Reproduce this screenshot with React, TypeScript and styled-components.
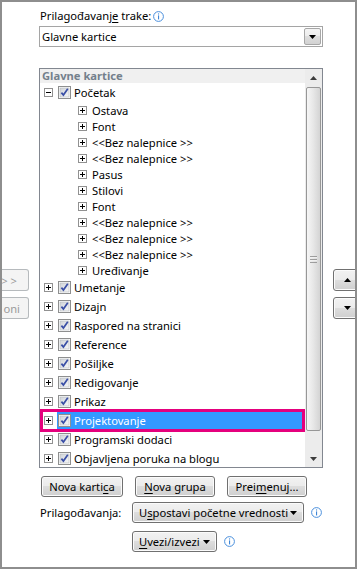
import styled, { createGlobalStyle, css } from 'styled-components'

const GlobalStyle = createGlobalStyle`
  html, body {
    margin: 0;
    padding: 0;
    background: #fff;
  }
  body {
    font-family: "Noto Sans", "DejaVu Sans", sans-serif;
    font-size: 11.2px;
    color: #000;
  }
  * {
    box-sizing: border-box;
  }
`

const groups = [
  'Ostava',
  'Font',
  '<<Bez nalepnice >>',
  '<<Bez nalepnice >>',
  'Pasus',
  'Stilovi',
  'Font',
  '<<Bez nalepnice >>',
  '<<Bez nalepnice >>',
  '<<Bez nalepnice >>',
  'Uređivanje',
]

const tabs = [
  'Umetanje',
  'Dizajn',
  'Raspored na stranici',
  'Reference',
  'Pošiljke',
  'Redigovanje',
  'Prikaz',
  'Projektovanje',
  'Programski dodaci',
  'Objavljena poruka na blogu',
]

const SELECTED_TAB = 'Projektovanje'

const Triangle = ({ up, color = '#000' }: { up?: boolean; color?: string }) => (
  <svg width="7" height="4" viewBox="0 0 7 4">
    <polygon points={up ? '0,4 7,4 3.5,0' : '0,0 7,0 3.5,4'} fill={color} />
  </svg>
)

const InfoIcon = () => (
  <svg width="11" height="11" viewBox="0 0 11 11">
    <circle cx="5.5" cy="5.5" r="4.9" fill="#fff" stroke="#4a8fdc" strokeWidth="1" />
    <rect x="5" y="2.4" width="1.1" height="1.1" fill="#3f86d6" />
    <rect x="5" y="4.4" width="1.1" height="4" fill="#3f86d6" />
  </svg>
)

const CheckBox = () => (
  <svg width="13" height="13" viewBox="0 0 13 13">
    <defs>
      <linearGradient id="cbFill" x1="0" y1="0" x2="1" y2="1">
        <stop offset="0" stopColor="#cfd3d8" />
        <stop offset="1" stopColor="#f7f8f9" />
      </linearGradient>
    </defs>
    <rect x="0.5" y="0.5" width="12" height="12" fill="#fff" stroke="#8e8f8f" />
    <rect x="2" y="2" width="9" height="9" fill="url(#cbFill)" stroke="#b4b8bd" strokeWidth="0.6" />
    <path d="M3.4 6.6 L5.4 9.1 L9.8 2.8" fill="none" stroke="#3a4fa6" strokeWidth="1.7" />
  </svg>
)

const Expander = ({ open }: { open?: boolean }) => (
  <ExpanderBox>
    <svg width="9" height="9" viewBox="0 0 9 9">
      <rect x="0.5" y="0.5" width="8" height="8" fill="#fff" stroke="#919191" />
      <rect x="2" y="4" width="5" height="1" fill="#000" />
      {!open && <rect x="4" y="2" width="1" height="5" fill="#000" />}
    </svg>
  </ExpanderBox>
)

const Key = ({ children }: { children: string }) => <Accel>{children}</Accel>

export default function App() {
  return (
    <>
      <GlobalStyle />
      <Frame>
        <SideColumn $side="left">
          <SideButton $side="left" $pad={11} disabled>
            &gt; &gt;
          </SideButton>
          <SideButton $side="left" $pad={8} disabled>
            oni
          </SideButton>
        </SideColumn>

        <Main>
          <Heading>
            <span>
              Prilagođavanj<Key>e</Key> trake:
            </span>
            <InfoIcon />
          </Heading>

          <Combo>
            <ComboText>Glavne kartice</ComboText>
            <ComboButton>
              <Triangle />
            </ComboButton>
          </Combo>

          <Tree>
            <TreeBody>
              <TreeHeader>Glavne kartice</TreeHeader>
              <TopRow>
                <Expander open />
                <ItemLabel>
                  <CheckBox />
                  <span>Početak</span>
                </ItemLabel>
              </TopRow>
              {groups.map((g, i) => (
                <ChildRow key={i}>
                  <Expander />
                  <span>{g}</span>
                </ChildRow>
              ))}
              {tabs.map((t) => (
                <TopRow key={t} $selected={t === SELECTED_TAB}>
                  <Expander />
                  <ItemLabel $selected={t === SELECTED_TAB}>
                    <CheckBox />
                    <span>{t}</span>
                  </ItemLabel>
                </TopRow>
              ))}
            </TreeBody>
            <ScrollBar>
              <ScrollArrow>
                <Triangle up color="#3c3c3c" />
              </ScrollArrow>
              <Thumb>
                <Grip />
              </Thumb>
              <ScrollTrack />
              <ScrollArrow>
                <Triangle color="#3c3c3c" />
              </ScrollArrow>
            </ScrollBar>
          </Tree>

          <ButtonRow>
            <PushButton $w={82}>
              Nova karti<Key>c</Key>a
            </PushButton>
            <PushButton $w={80}>
              <Key>N</Key>ova grupa
            </PushButton>
            <PushButton $w={80}>
              Prei<Key>m</Key>enuj...
            </PushButton>
          </ButtonRow>

          <FieldRow>
            <FieldLabel>Prilagođavanja:</FieldLabel>
            <PushButton $w={172} $menu>
              <span>
                U<Key>s</Key>postavi početne vrednosti
              </span>
              <Triangle />
            </PushButton>
            <InfoSlot>
              <InfoIcon />
            </InfoSlot>
          </FieldRow>

          <FieldRow $indent>
            <PushButton $w={85} $menu>
              <span>
                <Key>U</Key>vezi/izvezi
              </span>
              <Triangle />
            </PushButton>
            <InfoSlot>
              <InfoIcon />
            </InfoSlot>
          </FieldRow>
        </Main>

        <SideColumn $side="right">
          <SideButton $side="right">
            <Triangle up />
          </SideButton>
          <SideButton $side="right">
            <Triangle />
          </SideButton>
        </SideColumn>
      </Frame>
    </>
  )
}

const Frame = styled.div`
  width: 357px;
  height: 569px;
  border: 2px solid #8e8e8e;
  overflow: hidden;
  display: grid;
  grid-template-columns: 37px 284px 1fr;
  background: #fff;
`

const SideColumn = styled.div<{ $side: 'left' | 'right' }>`
  display: flex;
  flex-direction: column;
  gap: 6px;
  padding-top: 267px;
  align-items: ${(p) => (p.$side === 'left' ? 'flex-end' : 'flex-start')};
  overflow: hidden;
`

const SideButton = styled.button<{ $side: 'left' | 'right'; $pad?: number }>`
  flex: none;
  height: 22px;
  font: inherit;
  white-space: nowrap;
  display: flex;
  align-items: center;
  padding: 0;
  ${(p) =>
    p.$side === 'left'
      ? css`
          width: 27px;
          margin-right: 10px;
          justify-content: flex-end;
          padding-right: ${p.$pad ?? 10}px;
          border: 1px solid #b6babd;
          border-left: none;
          border-radius: 0 3px 3px 0;
          background: #f4f4f4;
          color: #9a9a9a;
        `
      : css`
          width: 30px;
          margin-left: 10px;
          justify-content: flex-start;
          padding-left: 10px;
          border: 1px solid #707070;
          border-radius: 3px;
          background: linear-gradient(#f2f2f2, #ebebeb 50%, #dddddd 50%, #cfcfcf);
          box-shadow: inset 0 0 0 1px #fbfbfb;
        `}
`

const Main = styled.div`
  display: flex;
  flex-direction: column;
  padding-top: 6px;
  min-width: 0;
`

const Heading = styled.div`
  display: flex;
  align-items: center;
  gap: 2px;
  height: 16px;
  line-height: 16px;
  padding-left: 1px;
`

const Accel = styled.span`
  text-decoration: underline;
  text-underline-offset: 2px;
`

const Combo = styled.div`
  margin-top: 2px;
  height: 21px;
  border: 1px solid #a5a5a5;
  display: flex;
  align-items: stretch;
  padding-left: 2px;
`

const ComboText = styled.div`
  flex: 1;
  display: flex;
  align-items: center;
`

const ComboButton = styled.div`
  width: 17px;
  margin: 1px;
  border: 1px solid #a7a7a7;
  border-radius: 2px;
  background: linear-gradient(#f4f4f4, #ececec 50%, #dedede 50%, #d2d2d2);
  display: flex;
  align-items: center;
  justify-content: center;
`

const Tree = styled.div`
  margin-top: 21px;
  height: 400px;
  border: 1px solid #828790;
  display: flex;
`

const TreeBody = styled.div`
  flex: 1;
  min-width: 0;
  overflow: hidden;
  display: flex;
  flex-direction: column;
`

const TreeHeader = styled.div`
  flex: none;
  height: 14px;
  line-height: 14px;
  padding-left: 2px;
  background: #f0f0f0;
  color: #74808c;
  font-weight: bold;
`

const ExpanderBox = styled.span`
  flex: none;
  display: flex;
  width: 9px;
  height: 9px;
`

const TopRow = styled.div<{ $selected?: boolean }>`
  position: relative;
  flex: none;
  height: 19px;
  display: flex;
  align-items: center;
  padding-left: 4px;
  white-space: nowrap;

  ${ExpanderBox} {
    margin-right: 4px;
  }

  ${(p) =>
    p.$selected &&
    css`
      &::after {
        content: '';
        position: absolute;
        left: 0;
        right: 0;
        top: -2px;
        bottom: -2px;
        border: 3px solid #e5007d;
        pointer-events: none;
      }
    `}
`

const ItemLabel = styled.div<{ $selected?: boolean }>`
  flex: 1;
  align-self: stretch;
  display: flex;
  align-items: center;
  gap: 3px;
  padding-left: 1px;
  margin-right: 3px;
  background: ${(p) => (p.$selected ? '#3399ff' : 'transparent')};
  color: ${(p) => (p.$selected ? '#fff' : '#000')};
`

const ChildRow = styled.div`
  flex: none;
  height: 16px;
  display: flex;
  align-items: center;
  padding-left: 38px;
  gap: 5px;
  white-space: nowrap;
`

const ScrollBar = styled.div`
  flex: none;
  width: 17px;
  background: #ececec;
  display: flex;
  flex-direction: column;
`

const ScrollArrow = styled.div`
  flex: none;
  height: 17px;
  display: flex;
  align-items: center;
  justify-content: center;
`

const Thumb = styled.div`
  flex: none;
  height: 344px;
  margin: 1px 1px 0;
  border: 1px solid #979797;
  border-radius: 2px;
  background: linear-gradient(to right, #f6f6f6, #e8e8e8 45%, #d4d4d4);
  display: flex;
  align-items: center;
  justify-content: center;
`

const Grip = styled.div`
  width: 7px;
  height: 7px;
  background: repeating-linear-gradient(#7e7e7e 0 1px, #f4f4f4 1px 2px, transparent 2px 3px);
  opacity: 0.7;
`

const ScrollTrack = styled.div`
  flex: 1;
`

const ButtonRow = styled.div`
  margin-top: 8px;
  display: flex;
  gap: 12px;
  padding-left: 2px;
`

const PushButton = styled.button<{ $w: number; $menu?: boolean }>`
  flex: none;
  width: ${(p) => p.$w}px;
  height: 21px;
  padding: 0 6px;
  border: 1px solid #707070;
  border-radius: 3px;
  background: linear-gradient(#f2f2f2, #ebebeb 50%, #dddddd 50%, #cfcfcf);
  box-shadow: inset 0 0 0 1px #fbfbfb;
  font: inherit;
  color: #000;
  white-space: nowrap;
  display: flex;
  align-items: center;
  justify-content: ${(p) => (p.$menu ? 'space-between' : 'center')};
`

const FieldRow = styled.div<{ $indent?: boolean }>`
  margin-top: ${(p) => (p.$indent ? 8 : 5)}px;
  height: 21px;
  display: flex;
  align-items: center;
  padding-left: ${(p) => (p.$indent ? 93 : 1)}px;
`

const FieldLabel = styled.div`
  width: 92px;
`

const InfoSlot = styled.div`
  display: flex;
  margin-left: 7px;
`
